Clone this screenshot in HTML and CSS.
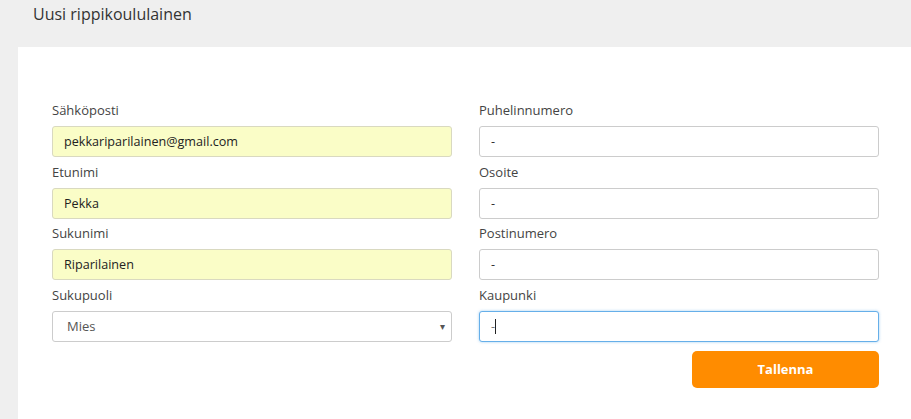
FILE: index.html
```html
<!DOCTYPE html>
<html lang="fi">
<head>
    <meta charset="UTF-8">
    <title>Uusi rippikoululainen</title>
    <link rel="stylesheet" href="styles.css">
</head>
<body>
    <h1 class="page-title">Uusi rippikoululainen</h1>
    <div class="panel">
        <form class="form-grid">
            <div class="col">
                <div class="field"><label>Sähköposti</label><input class="input filled" value="pekkariparilainen@gmail.com"></div>
                <div class="field"><label>Etunimi</label><input class="input filled" value="Pekka"></div>
                <div class="field"><label>Sukunimi</label><input class="input filled" value="Riparilainen"></div>
                <div class="field"><label>Sukupuoli</label>
                    <div class="select"><span>Mies</span><span class="arrow">&#9662;</span></div>
                </div>
            </div>
            <div class="col">
                <div class="field"><label>Puhelinnumero</label><input class="input" value="-"></div>
                <div class="field"><label>Osoite</label><input class="input" value="-"></div>
                <div class="field"><label>Postinumero</label><input class="input" value="-"></div>
                <div class="field"><label>Kaupunki</label><div class="input focused">-<span class="caret"></span></div></div>
                <div class="actions"><button type="button" class="btn-save">Tallenna</button></div>
            </div>
        </form>
    </div>
</body>
</html>
```

FILE: styles.css
```css
body { margin: 0; background: #efefef; font-family: "Open Sans", Arial, sans-serif; color: #333; font-size: 13px; height: 419px; overflow: hidden; }
.page-title { margin: 0; padding: 3px 0 0 33px; height: 44px; font-size: 16px; font-weight: normal; line-height: 22px; color: #333; }
.panel { background: #fff; margin-left: 18px; height: 372px; padding: 54px 33px 0 34px; box-sizing: border-box; }
.form-grid { display: grid; grid-template-columns: 400px 400px; column-gap: 27px; }
.field { margin-bottom: 5.67px; }
.field label { display: block; line-height: 18px; margin-bottom: 7px; color: #444; }
.input { display: block; width: 100%; height: 31px; box-sizing: border-box; border: 1px solid #ccc; border-radius: 3px; padding: 0 11px; font: inherit; font-size: 12.6px; color: #333; background: #fff; line-height: 29px; outline: none; }
.input.filled { background: #fafdc7; border-color: #d9d9c0; color: #222; }
.input.focused { border-color: #66afe9; box-shadow: 0 0 3px rgba(102, 175, 233, 0.6); color: #777; }
.caret { display: inline-block; width: 1px; height: 15px; background: #222; vertical-align: middle; margin-top: -2px; }
.select { display: flex; justify-content: space-between; align-items: center; height: 31px; box-sizing: border-box; border: 1px solid #ccc; border-radius: 3px; padding: 0 6px 0 14px; color: #555; }
.select .arrow { font-size: 10px; color: #555; }
.actions { display: flex; justify-content: flex-end; padding-top: 3px; }
.btn-save { width: 187px; height: 37px; border: none; border-radius: 5px; background: #ff8c00; color: #fff; font: inherit; font-size: 13px; font-weight: bold; cursor: pointer; }
```
